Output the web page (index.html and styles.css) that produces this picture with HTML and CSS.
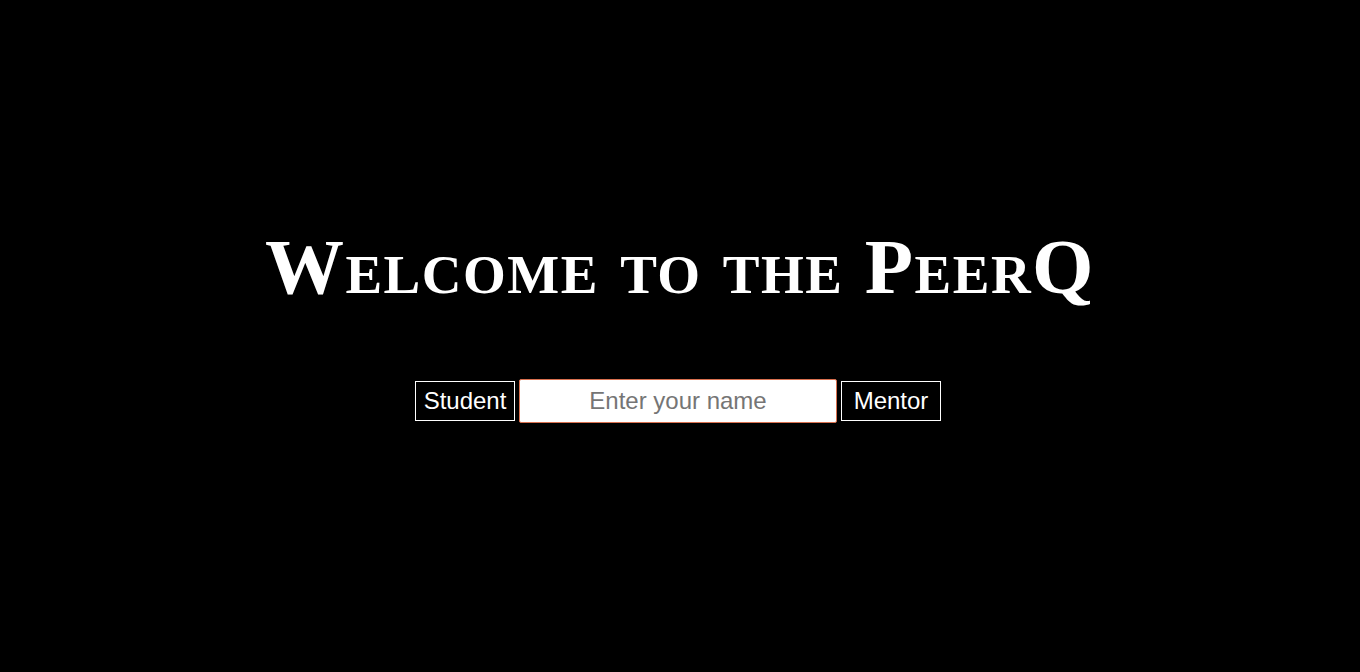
FILE: index.html
```html
<!DOCTYPE html>
<html lang="en">
<head>
<meta charset="utf-8">
<title>PeerQ</title>
<link rel="stylesheet" href="styles.css">
</head>
<body>
<main class="page">
  <h1 class="title">Welcome to the PeerQ</h1>
  <div class="role-row">
    <button class="role-btn" type="button">Student</button>
    <input class="name-input" type="text" placeholder="Enter your name" autofocus>
    <button class="role-btn" type="button">Mentor</button>
  </div>
</main>
</body>
</html>
```
FILE: styles.css
```css
html, body {
  margin: 0;
  padding: 0;
  background: #000;
  height: 100%;
}
.page {
  display: flex;
  flex-direction: column;
  align-items: center;
  padding-top: 227px;
  box-sizing: border-box;
  min-height: 100vh;
}
.title {
  margin: 0;
  color: #fff;
  font-family: "Liberation Serif", "DejaVu Serif", serif;
  font-weight: bold;
  font-variant: small-caps;
  font-size: 79px;
  line-height: 1;
  letter-spacing: 1.5px;
}
.role-row {
  margin-top: 73px;
  margin-right: 4px;
  display: flex;
  align-items: center;
  gap: 4px;
}
.role-btn {
  width: 100px;
  height: 40px;
  box-sizing: border-box;
  background: #000;
  color: #fff;
  border: 1px solid #fff;
  font-family: "Liberation Sans", Arial, sans-serif;
  font-size: 24px;
  padding: 0;
}
.name-input {
  width: 318px;
  height: 44px;
  box-sizing: border-box;
  border: 1px solid #d9704f;
  border-radius: 2px;
  background: #fff;
  font-family: "Liberation Sans", Arial, sans-serif;
  font-size: 24px;
  text-align: center;
  outline: none;
  padding: 0 8px;
  caret-color: #000;
}
.name-input::placeholder {
  color: #757575;
}
```
